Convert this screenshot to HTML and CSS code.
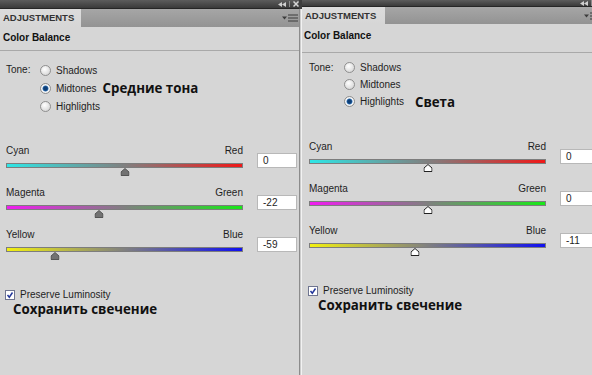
FILE: index.html
```html
<!DOCTYPE html>
<html lang="ru">
<head>
  <meta charset="UTF-8">
  <title>Color Balance</title>
  <link rel="stylesheet" href="styles.css">
</head>
<body>
  <div class="screen">
    <!-- Панель 1: средние тона -->
    <section class="panel">
      <div class="titlebar">
        <span class="win-ctrl">
          <svg width="8" height="5" viewBox="0 0 8 5"><path d="M4 0 0 2.5 4 5Z M8 0 4 2.5 8 5Z" fill="#cfcfcf"/></svg>
          <span class="sep"></span>
          <svg width="6" height="6" viewBox="0 0 6 6"><path d="M0.5 0.5 5.5 5.5 M5.5 0.5 0.5 5.5" stroke="#d6d6d6" stroke-width="1.5"/></svg>
        </span>
      </div>
      <div class="tabrow">
        <div class="tab">ADJUSTMENTS</div>
        <svg class="menu" width="16" height="8" viewBox="0 0 16 8"><path d="M0 2.5h5L2.5 5.5Z" fill="#3c3c3c"/><path d="M6 1h10M6 4h10M6 7h10" stroke="#3c3c3c" stroke-width="1.2"/></svg>
      </div>
      <h2 class="heading">Color Balance</h2>
      <div class="body">
        <div class="tone">
          <span class="tone-label">Tone:</span>
          <div class="radios">
            <label class="radio"><span class="dot"></span>Shadows</label>
            <label class="radio on"><span class="dot"></span>Midtones<span class="note">Средние тона</span></label>
            <label class="radio"><span class="dot"></span>Highlights</label>
          </div>
        </div>

        <div class="sliders">
          <div class="slider">
            <div class="ends"><span>Cyan</span><span>Red</span></div>
            <div class="track cr">
              <svg class="thumb" style="left: 50%" width="9" height="8" viewBox="0 0 9 8"><path d="M4.5 0.5 8.5 4v3.5H0.5V4Z"/></svg>
            </div>
            <div class="value">0</div>
          </div>
          <div class="slider">
            <div class="ends"><span>Magenta</span><span>Green</span></div>
            <div class="track mg">
              <svg class="thumb" style="left: 39%" width="9" height="8" viewBox="0 0 9 8"><path d="M4.5 0.5 8.5 4v3.5H0.5V4Z"/></svg>
            </div>
            <div class="value">-22</div>
          </div>
          <div class="slider">
            <div class="ends"><span>Yellow</span><span>Blue</span></div>
            <div class="track yb">
              <svg class="thumb" style="left: 20.5%" width="9" height="8" viewBox="0 0 9 8"><path d="M4.5 0.5 8.5 4v3.5H0.5V4Z"/></svg>
            </div>
            <div class="value">-59</div>
          </div>
        </div>

        <label class="preserve">
          <svg class="check" width="10" height="10" viewBox="0 0 10 10"><rect x="0.5" y="0.5" width="9" height="9" fill="#fff" stroke="#6f7590"/><path d="M2.5 5 4.3 7.2 7.5 2.5" fill="none" stroke="#23379a" stroke-width="1.5"/></svg>
          Preserve Luminosity
        </label>
        <div class="note note-block">Сохранить свечение</div>
      </div>
    </section>

    <div class="divider"></div>

    <!-- Панель 2: света -->
    <section class="panel panel-b">
      <div class="titlebar">
        <span class="win-ctrl">
          <svg width="8" height="5" viewBox="0 0 8 5"><path d="M4 0 0 2.5 4 5Z M8 0 4 2.5 8 5Z" fill="#cfcfcf"/></svg>
          <span class="sep"></span>
          <svg width="6" height="6" viewBox="0 0 6 6"><path d="M0.5 0.5 5.5 5.5 M5.5 0.5 0.5 5.5" stroke="#d6d6d6" stroke-width="1.5"/></svg>
        </span>
      </div>
      <div class="tabrow">
        <div class="tab">ADJUSTMENTS</div>
        <svg class="menu" width="16" height="8" viewBox="0 0 16 8"><path d="M0 2.5h5L2.5 5.5Z" fill="#3c3c3c"/><path d="M6 1h10M6 4h10M6 7h10" stroke="#3c3c3c" stroke-width="1.2"/></svg>
      </div>
      <h2 class="heading">Color Balance</h2>
      <div class="body">
        <div class="tone">
          <span class="tone-label">Tone:</span>
          <div class="radios">
            <label class="radio"><span class="dot"></span>Shadows</label>
            <label class="radio"><span class="dot"></span>Midtones</label>
            <label class="radio on"><span class="dot"></span>Highlights<span class="note">Света</span></label>
          </div>
        </div>

        <div class="sliders">
          <div class="slider">
            <div class="ends"><span>Cyan</span><span>Red</span></div>
            <div class="track cr">
              <svg class="thumb" style="left: 50%" width="9" height="8" viewBox="0 0 9 8"><path d="M4.5 0.5 8.5 4v3.5H0.5V4Z"/></svg>
            </div>
            <div class="value">0</div>
          </div>
          <div class="slider">
            <div class="ends"><span>Magenta</span><span>Green</span></div>
            <div class="track mg">
              <svg class="thumb" style="left: 50%" width="9" height="8" viewBox="0 0 9 8"><path d="M4.5 0.5 8.5 4v3.5H0.5V4Z"/></svg>
            </div>
            <div class="value">0</div>
          </div>
          <div class="slider">
            <div class="ends"><span>Yellow</span><span>Blue</span></div>
            <div class="track yb">
              <svg class="thumb" style="left: 44.5%" width="9" height="8" viewBox="0 0 9 8"><path d="M4.5 0.5 8.5 4v3.5H0.5V4Z"/></svg>
            </div>
            <div class="value">-11</div>
          </div>
        </div>

        <label class="preserve">
          <svg class="check" width="10" height="10" viewBox="0 0 10 10"><rect x="0.5" y="0.5" width="9" height="9" fill="#fff" stroke="#6f7590"/><path d="M2.5 5 4.3 7.2 7.5 2.5" fill="none" stroke="#23379a" stroke-width="1.5"/></svg>
          Preserve Luminosity
        </label>
        <div class="note note-block">Сохранить свечение</div>
      </div>
    </section>
  </div>
</body>
</html>
```

FILE: styles.css
```css
* {
  box-sizing: border-box;
}
body {
  margin: 0;
  background-color: #d6d6d6;
  font-family: "Liberation Sans", Arial, sans-serif;
  font-size: 10px;
  color: #1e1e1e;
}
.screen {
  display: flex;
  width: 592px;
  height: 375px;
  overflow: hidden;
}
.panel {
  flex: 0 0 299px;
  width: 299px;
  display: flex;
  flex-direction: column;
  background-color: #d6d6d6;
}
.divider {
  flex: 0 0 3px;
  border-top: 9px solid #3e3e3e;
  background: linear-gradient(to right, #8c8c8c 0 1px, #cdcdcd 1px 2px, #f2f2f2 2px 3px);
}

/* заголовок окна */
.titlebar {
  height: 9px;
  background: linear-gradient(#5c5c5c, #3a3a3a);
  border-bottom: 1px solid #262626;
  display: flex;
  justify-content: flex-end;
  align-items: center;
}
.win-ctrl {
  display: flex;
  align-items: center;
  gap: 3px;
}
.win-ctrl .sep {
  width: 1px;
  height: 6px;
  background-color: #8a8a8a;
}
.tabrow {
  height: 18px;
  display: flex;
  justify-content: space-between;
  background: linear-gradient(#a6a6a6, #939393);
}
.tab {
  width: 81px;
  padding-left: 3px;
  background: linear-gradient(#dcdcdc, #d6d6d6);
  font-weight: bold;
  font-size: 9.5px;
  line-height: 18px;
  color: #333;
}
.menu {
  align-self: center;
  margin-right: 1px;
}
.heading {
  margin: 0;
  padding: 5px 0 6px 3px;
  font-size: 10px;
  line-height: 12px;
  font-weight: bold;
  color: #111;
  border-bottom: 1px solid #a9a9a9;
}

/* тело панели */
.body {
  padding: 10px 3px 0 6px;
  display: flex;
  flex-direction: column;
}
.tone {
  display: flex;
  align-items: flex-start;
}
.tone-label {
  width: 34px;
  line-height: 18px;
}
.radios {
  display: flex;
  flex-direction: column;
}
.radio {
  display: flex;
  align-items: center;
  height: 18px;
}
.dot {
  width: 11px;
  height: 11px;
  margin-right: 5px;
  border-radius: 50%;
  border: 1px solid #8f8f8f;
  background: radial-gradient(circle at 40% 35%, #ffffff, #cdcdcd);
}
.radio.on .dot {
  background: radial-gradient(circle, #0e3f78 0 1.8px, #2f6fb0 2.6px, #ffffff 3.4px, #e2e2e2 5px);
}
.note {
  font-family: "Open Sans", sans-serif;
  font-weight: 700;
  font-size: 13.3px;
  line-height: 16px;
  color: #111;
  margin-left: 6px;
}

/* ползунки */
.sliders {
  margin-top: 30px;
  display: flex;
  flex-direction: column;
  gap: 19px;
}
.slider {
  display: grid;
  grid-template-columns: 237px 40px;
  column-gap: 14px;
}
.ends {
  display: flex;
  justify-content: space-between;
  line-height: 12px;
}
.track {
  grid-column: 1;
  height: 5px;
  margin-top: 6px;
  border: 1px solid #7d7d7d;
  position: relative;
}
.cr {
  background: linear-gradient(to right, #2ee6e6, #808080 50%, #f01818);
}
.mg {
  background: linear-gradient(to right, #f01cf0, #808080 50%, #18e818);
}
.yb {
  background: linear-gradient(to right, #f2f010, #808080 50%, #1010f0);
}
.thumb {
  position: absolute;
  top: calc(100% + 1px);
  transform: translateX(-50%);
  fill: #727272;
  stroke: #555;
}
.value {
  grid-column: 2;
  grid-row: 1 / 3;
  align-self: end;
  height: 15px;
  padding-left: 5px;
  line-height: 13px;
  background-color: #fff;
  border: 1px solid #b8b8b8;
}

.preserve {
  margin-top: 37px;
  display: flex;
  align-items: center;
  line-height: 12px;
}
.check {
  margin-left: -1px;
  margin-right: 5px;
}
.note-block {
  margin: 0 0 0 7px;
}

/* вторая панель снята чуть плотнее */
.panel-b .titlebar {
  height: 7px;
}
.panel-b .tabrow {
  height: 17px;
}
.panel-b .tab {
  width: 83px;
  line-height: 17px;
}
.panel-b .heading {
  padding: 6px 0 10px 2px;
}
.panel-b .body {
  padding: 6px 3px 0 7px;
}
.panel-b .tone-label {
  width: 35px;
  line-height: 17px;
}
.panel-b .radio {
  height: 17px;
}
.panel-b .radio .note {
  margin-left: 11px;
}
.panel-b .sliders {
  margin-top: 31px;
}
.panel-b .thumb {
  fill: #fff;
  stroke: #222;
}
.panel-b .note-block {
  margin-left: 9px;
}
```
